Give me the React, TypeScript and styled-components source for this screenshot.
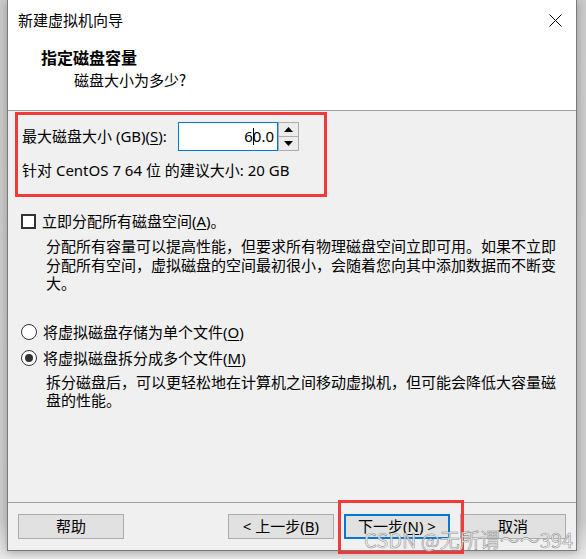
import React from "react";
import styled, { createGlobalStyle } from "styled-components";

const Global = createGlobalStyle`
  html, body { margin: 0; padding: 0; }
  body {
    width: 586px;
    height: 559px;
    overflow: hidden;
    background: linear-gradient(to bottom, #c9c9c9 0, #cbcbcb 520px, #e9e9e9 559px);
    font-family: "Noto Sans", "Noto Sans CJK SC", sans-serif;
    color: #000;
  }
`;

const Page = styled.div`
  padding-left: 7px;
  width: 586px;
  height: 559px;
  box-sizing: border-box;
`;

const Window = styled.div`
  position: relative;
  width: 570px;
  height: 551px;
  box-sizing: border-box;
  border: 1px solid #7a7a7a;
  border-top: none;
  background: #f0f0f0;
  display: flex;
  flex-direction: column;
  box-shadow: 0 2px 8px rgba(0, 0, 0, 0.25);
`;

const TitleBar = styled.div`
  height: 40px;
  background: #fff;
  display: flex;
  align-items: center;
  justify-content: space-between;
  padding: 0 14px 0 10px;
  font-size: 15px;
`;

const TitleText = styled.span`
  line-height: 20px;
  font-family: "Noto Sans CJK SC", sans-serif;
`;

const Header = styled.div`
  height: 71px;
  box-sizing: border-box;
  background: #fff;
  border-bottom: 1px solid #a0a0a0;
  padding: 7px 0 0 33px;
`;

const HeaderTitle = styled.div`
  font-family: "Noto Sans CJK SC", sans-serif;
  font-weight: 700;
  font-size: 16px;
  line-height: 20px;
`;

const HeaderSub = styled.div`
  font-family: "Noto Sans CJK SC", sans-serif;
  font-size: 15px;
  line-height: 20px;
  margin-top: 3px;
  padding-left: 33px;
`;

const Body = styled.div`
  flex: 1;
  padding: 1px 0 0 7px;
  display: flex;
  flex-direction: column;
  font-size: 15px;
`;

const Highlight = styled.div`
  width: 312px;
  height: 85px;
  box-sizing: border-box;
  border: 3px solid #f23a3a;
  padding: 7px 0 0 4px;
`;

const FieldRow = styled.div`
  display: flex;
  align-items: center;
  height: 29px;
`;

const FieldLabel = styled.span`
  width: 156px;
  line-height: 19px;
`;

const U = styled.span`
  text-decoration: underline;
  text-underline-offset: 2px;
`;

const NumberBox = styled.div`
  width: 100px;
  height: 29px;
  box-sizing: border-box;
  border: 1px solid #0078d7;
  background: #fff;
  display: flex;
  align-items: center;
  justify-content: flex-end;
  padding-right: 3px;
  line-height: 19px;
`;

const Caret = styled.span`
  display: inline-block;
  width: 1px;
  height: 17px;
  background: #000;
  vertical-align: middle;
  margin: 0 -1px 0 0;
`;

const Spinner = styled.div`
  width: 21px;
  height: 29px;
  box-sizing: border-box;
  border: 1px solid #adadad;
  display: flex;
  flex-direction: column;
`;

const SpinBtn = styled.div<{ $top?: boolean }>`
  flex: 1;
  background: #ececec;
  display: flex;
  align-items: center;
  justify-content: center;
  border-bottom: ${(p) => (p.$top ? "1px solid #adadad" : "none")};
`;

const Hint = styled.div`
  margin-top: 10px;
  line-height: 19px;
`;

const OptionRow = styled.div<{ $mt: number }>`
  display: flex;
  align-items: center;
  gap: 6px;
  margin-top: ${(p) => p.$mt}px;
  margin-left: 6px;
  line-height: 19px;
`;

const CheckBox = styled.span`
  width: 15px;
  height: 15px;
  box-sizing: border-box;
  border: 2px solid #333;
  background: #fff;
`;

const Radio = styled.span<{ $on?: boolean }>`
  width: 16px;
  height: 16px;
  box-sizing: border-box;
  border: 1.5px solid #333;
  border-radius: 50%;
  background: #fff;
  display: flex;
  align-items: center;
  justify-content: center;
  &::after {
    content: "";
    display: ${(p) => (p.$on ? "block" : "none")};
    width: 8px;
    height: 8px;
    border-radius: 50%;
    background: #333;
  }
`;

const Desc = styled.div<{ $mt: number; $lh: number }>`
  margin: ${(p) => p.$mt}px 0 0 31px;
  width: 520px;
  line-height: ${(p) => p.$lh}px;
`;

const Footer = styled.div`
  height: 48px;
  box-sizing: border-box;
  border-top: 1px solid #a0a0a0;
  padding: 11px 10px 0 10px;
  display: flex;
  align-items: flex-start;
  gap: 10px;
  font-size: 15px;
`;

const Spacer = styled.div`
  flex: 1;
`;

const Button = styled.div<{ $default?: boolean }>`
  width: 106px;
  height: 25px;
  box-sizing: border-box;
  background: #e1e1e1;
  border: ${(p) => (p.$default ? "2px solid #0078d7" : "1px solid #adadad")};
  display: flex;
  align-items: center;
  justify-content: center;
  line-height: 19px;
`;

const Marked = styled.div`
  position: relative;
`;

const MarkFrame = styled.div`
  position: absolute;
  left: -6px;
  top: -14px;
  right: -14px;
  bottom: -15px;
  border: 3px solid #f23a3a;
  pointer-events: none;
`;

const Watermark = styled.div`
  position: absolute;
  left: 356px;
  top: 527px;
  font-family: "Noto Sans CJK SC", sans-serif;
  font-size: 20px;
  line-height: 26px;
  color: rgba(245, 245, 245, 0.9);
  white-space: nowrap;
  -webkit-text-stroke: 0.6px rgba(120, 120, 120, 0.8);
  pointer-events: none;
`;

const Close = () => (
  <svg width="13" height="13" viewBox="0 0 13 13">
    <path d="M0.5 0.5 L12.5 12.5 M12.5 0.5 L0.5 12.5" stroke="#000" strokeWidth="1" />
  </svg>
);

const Arrow = ({ up }: { up?: boolean }) => (
  <svg width="9" height="5" viewBox="0 0 9 5">
    <path d={up ? "M0 5 L4.5 0 L9 5 Z" : "M0 0 L9 0 L4.5 5 Z"} fill="#000" />
  </svg>
);

export default function App() {
  return (
    <Page>
      <Global />
      <Window>
        <TitleBar>
          <TitleText>新建虚拟机向导</TitleText>
          <Close />
        </TitleBar>
        <Header>
          <HeaderTitle>指定磁盘容量</HeaderTitle>
          <HeaderSub>磁盘大小为多少?</HeaderSub>
        </Header>
        <Body>
          <Highlight>
            <FieldRow>
              <FieldLabel>
                最大磁盘大小 (GB)(<U>S</U>):
              </FieldLabel>
              <NumberBox>
                6<Caret />0.0
              </NumberBox>
              <Spinner>
                <SpinBtn $top>
                  <Arrow up />
                </SpinBtn>
                <SpinBtn>
                  <Arrow />
                </SpinBtn>
              </Spinner>
            </FieldRow>
            <Hint>针对 CentOS 7 64 位 的建议大小: 20 GB</Hint>
          </Highlight>

          <OptionRow $mt={15}>
            <CheckBox />
            <span>
              立即分配所有磁盘空间(<U>A</U>)。
            </span>
          </OptionRow>
          <Desc $mt={6} $lh={18.5}>
            分配所有容量可以提高性能，但要求所有物理磁盘空间立即可用。如果不立即分配所有空间，虚拟磁盘的空间最初很小，会随着您向其中添加数据而不断变大。
          </Desc>

          <OptionRow $mt={30}>
            <Radio />
            <span>
              将虚拟磁盘存储为单个文件(<U>O</U>)
            </span>
          </OptionRow>
          <OptionRow $mt={7}>
            <Radio $on />
            <span>
              将虚拟磁盘拆分成多个文件(<U>M</U>)
            </span>
          </OptionRow>
          <Desc $mt={5} $lh={18}>
            拆分磁盘后，可以更轻松地在计算机之间移动虚拟机，但可能会降低大容量磁盘的性能。
          </Desc>
        </Body>
        <Footer>
          <Button>帮助</Button>
          <Spacer />
          <Button>
            &lt; 上一步(<U>B</U>)
          </Button>
          <Marked>
            <Button $default>
              下一步(<U>N</U>) &gt;
            </Button>
            <MarkFrame />
          </Marked>
          <Button>取消</Button>
        </Footer>
        <Watermark>CSDN @无所谓～～394</Watermark>
      </Window>
    </Page>
  );
}
